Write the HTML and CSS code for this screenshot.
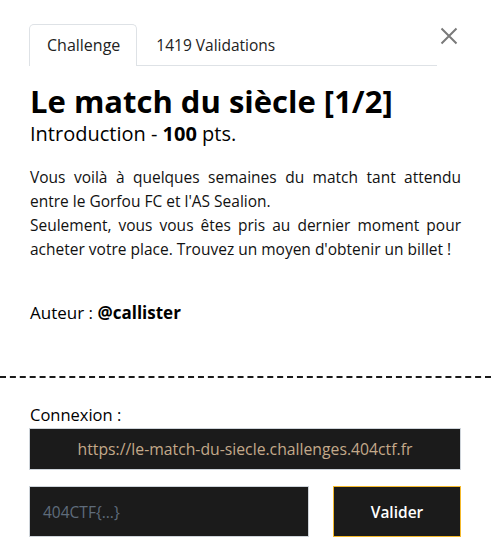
FILE: index.html
```html
<!DOCTYPE html>
<html lang="fr">
<head>
<meta charset="utf-8">
<link rel="stylesheet" href="styles.css">
</head>
<body>
<div class="modal">
  <div class="top">
    <div class="header">
      <ul class="tabs">
        <li class="tab active">Challenge</li>
        <li class="tab">1419 Validations</li>
      </ul>
      <button class="close" aria-label="Fermer">
        <svg width="18" height="18" viewBox="0 0 18 18"><path d="M1.5 1.5 L16.5 16.5 M16.5 1.5 L1.5 16.5" stroke="#7a7a7a" stroke-width="2" fill="none"/></svg>
      </button>
    </div>
    <h1 class="title">Le match du siècle [1/2]</h1>
    <p class="sub">Introduction - <b>100</b> pts.</p>
    <p class="desc">Vous voilà à quelques semaines du match tant attendu entre le Gorfou FC et l'AS Sealion.<br>Seulement, vous vous êtes pris au dernier moment pour acheter votre place. Trouvez un moyen d'obtenir un billet !</p>
    <p class="author">Auteur : <b>@callister</b></p>
  </div>
  <div class="dash"></div>
  <div class="bottom">
    <div class="label">Connexion :</div>
    <div class="url">https://le-match-du-siecle.challenges.404ctf.fr</div>
    <div class="row">
      <div class="flag">404CTF{...}</div>
      <button class="submit">Valider</button>
    </div>
  </div>
</div>
</body>
</html>
```
FILE: styles.css
```css
* { box-sizing: border-box; }
body {
  margin: 0;
  background: #fff;
  font-family: "Open Sans", "Noto Sans", sans-serif;
  color: #000;
}
.modal { width: 491px; }
.top { padding: 24px 30px 0 29px; }
.header { display: flex; align-items: flex-start; }
.tabs {
  list-style: none;
  margin: 0;
  padding: 0;
  display: flex;
  width: 408px;
  border-bottom: 1px solid #dee2e6;
}
.tab {
  font-size: 15.5px;
  color: #222;
  height: 41px;
  line-height: 40px;
  padding: 0 16px 0 17px;
  border: 1px solid transparent;
  border-bottom: none;
  border-radius: 5px 5px 0 0;
  margin-bottom: -1px;
  white-space: nowrap;
}
.tab.active { border-color: #dee2e6; background: #fff; height: 42px; font-size: 16px; }
.tab + .tab { padding-left: 18px; }
.close {
  margin-left: 3px;
  margin-top: 3px;
  padding: 0;
  border: 0;
  background: none;
  width: 18px;
  height: 18px;
  display: flex;
}
.title {
  margin: 16px 0 0 1px;
  font-size: 31px;
  font-weight: 700;
  line-height: 38px;
}
.sub {
  margin: 0 0 0 1px;
  font-size: 20px;
  line-height: 28px;
}
.desc {
  margin: 17px 0 0 1px;
  font-size: 15.5px;
  line-height: 24px;
  text-align: justify;
  color: #111;
}
.author {
  margin: 40px 0 0 1px;
  font-size: 17px;
  line-height: 24px;
}
.dash {
  margin-top: 51px;
  border-top: 2px dashed #1a1a1a;
  width: 100%;
}
.bottom { padding: 25px 30px 0 29px; }
.label { font-size: 16.5px; line-height: 24px; margin-left: 1px; }
.url {
  margin-top: 1px;
  height: 42px;
  background: #1b1b1b;
  border: 1px solid #ced4da;
  color: #c3a98a;
  font-size: 15.75px;
  display: flex;
  align-items: center;
  justify-content: center;
}
.row { display: flex; gap: 24px; margin-top: 16px; }
.flag {
  width: 280px;
  height: 51px;
  background: #1b1b1b;
  border: 1px solid #ced4da;
  color: #5f6c7b;
  font-size: 15.5px;
  display: flex;
  align-items: center;
  padding-left: 13px;
}
.submit {
  flex: 1;
  height: 51px;
  background: #1b1b1b;
  border: 1px solid #f4b92c;
  color: #fff;
  font-family: inherit;
  font-size: 15.5px;
  font-weight: 600;
}
```
